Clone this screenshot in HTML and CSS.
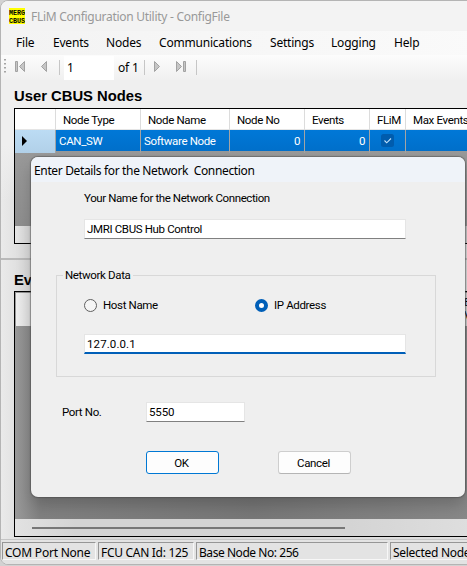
FILE: index.html
```html
<!DOCTYPE html>
<html lang="en">
<head>
<meta charset="utf-8">
<title>FLiM Configuration Utility - ConfigFile</title>
<link rel="stylesheet" href="styles.css">
</head>
<body>
<div class="window">
  <header class="titlebar">
    <svg class="logo" width="16" height="16" viewBox="0 0 16 16"><rect width="16" height="16" fill="#ffff00"/><text x="0" y="7" textLength="16" lengthAdjust="spacingAndGlyphs">MERG</text><text x="0" y="15" textLength="16" lengthAdjust="spacingAndGlyphs">CBUS</text></svg>
    <span>FLiM Configuration Utility - ConfigFile</span>
  </header>
  <nav class="menu"><span class="m1">File</span><span class="m2">Events</span><span class="m3">Nodes</span><span class="m4">Communications</span><span class="m5">Settings</span><span class="m6">Logging</span><span>Help</span></nav>
  <div class="toolbar">
    <svg class="nav-left" width="62" height="25" viewBox="0 0 62 25">
      <g fill="#a4a4a4"><path d="M3 4h2v1.500H3zM3 8h2v1.500H3zM3 12h2v1.500H3zM3 16h2v1.500H3z"/></g>
      <g fill="#c6c6c6" stroke="#a2a2a2"><path d="M14.500 6.500h2v10h-2zM23.500 6.500v10l-5-5zM45.500 6.500v10l-5-5z"/></g>
      <path d="M58.500 5v15" stroke="#c6c6c6"/>
    </svg>
    <span class="position">1</span>
    <span class="count">of 1</span>
    <svg width="56" height="25" viewBox="0 0 56 25">
      <path d="M1.500 5v15M53.500 5v15" stroke="#c6c6c6"/>
      <g fill="#c6c6c6" stroke="#a2a2a2"><path d="M11.500 6.500v10l5-5zM33.500 6.500v10l5-5zM40.500 6.500h2v10h-2z"/></g>
    </svg>
  </div>
  <main>
    <h2>User CBUS Nodes</h2>
    <section class="nodes">
      <div class="row head"><span></span><span>Node Type</span><span>Node Name</span><span>Node No</span><span>Events</span><span>FLiM</span><span>Max Events</span></div>
      <div class="row selected">
        <span class="marker"><svg width="6" height="10" viewBox="0 0 6 10"><path d="M0 0v10l5-5z"/></svg></span>
        <span>CAN_SW</span><span>Software Node</span><span class="num">0</span><span class="num">0</span>
        <span class="check"><svg width="13" height="13" viewBox="0 0 13 13"><rect width="13" height="13" rx="2.500" fill="#005cad"/><path d="M3.500 6.500l2.200 2.300 4.300-4.300" fill="none" stroke="#bfe0fa" stroke-width="1.100"/></svg></span>
        <span></span>
      </div>
      <div class="gridfoot"></div>
    </section>
    <div class="splitter"></div>
    <h2 class="events-title">Events</h2>
    <section class="events">
      <div class="events-head"><span>E<br>V</span></div>
      <div class="scroll"><i></i></div>
    </section>
  </main>
  <footer class="status"><span>COM Port None</span><span class="s2">FCU CAN Id: 125</span><span class="s3">Base Node No: 256</span><span class="s4">Selected Node</span></footer>
</div>
<div class="dialog">
  <div class="dialog-title">Enter Details for the Network&nbsp; Connection</div>
  <div class="dialog-body">
    <label class="name-label">Your Name for the Network Connection</label>
    <div class="field name"><span>JMRI CBUS Hub Control</span></div>
    <fieldset>
      <legend>Network Data</legend>
      <div class="radios">
        <label class="host"><i class="radio"></i><span>Host Name</span></label>
        <label class="ip"><i class="radio on"></i><span>IP Address</span></label>
      </div>
      <div class="field address"><span>127.0.0.1</span></div>
    </fieldset>
    <div class="port"><label>Port No.</label><div class="field"><span>5550</span></div></div>
    <div class="buttons"><div class="button primary">OK</div><div class="button">Cancel</div></div>
  </div>
</div>
</body>
</html>
```
FILE: styles.css
```css
* { box-sizing: border-box; }
body { margin: 0; width: 467px; height: 566px; overflow: hidden; background: #d2d2d2; font: 12px "Noto Sans", sans-serif; color: #000; position: relative; }
.window { width: 480px; height: 565px; border: 1px solid #b4b4b4; border-radius: 8px; background: #efefef; overflow: hidden; display: flex; flex-direction: column; }
.titlebar { height: 30px; flex: none; display: flex; align-items: center; padding-left: 8px; gap: 6px; background: #f3f3f3; color: #999; font-size: 12px; letter-spacing: -.28px; white-space: nowrap; }
.logo text { font: bold 7px "Liberation Mono", monospace; letter-spacing: 0; }
.menu { height: 24px; flex: none; display: flex; gap: 19px; align-items: center; padding: 0 0 1px 15px; background: linear-gradient(90deg, #f3f3f3, #fafafa); letter-spacing: -.2px; white-space: nowrap; }
.m1 { width: 18px; }
.m2, .m3 { width: 34px; }
.m4 { width: 92px; }
.m5 { width: 42px; }
.m6 { width: 44px; }
.toolbar { height: 25px; flex: none; display: flex; align-items: center; background: linear-gradient(#fcfcfc, #f0f0f0); }
.position { width: 50px; height: 24px; background: #fff; padding-left: 3px; line-height: 23px; margin-left: 1px; }
.count { width: 29px; padding-left: 4px; white-space: nowrap; letter-spacing: -.2px; }
.toolbar svg { flex: none; }
main { height: 459px; flex: none; padding-left: 13px; background: linear-gradient(#efefef 0 65px, transparent 120px), linear-gradient(90deg, #eaeaea, #d8d8d8 30px, #dedede); }
h2 { margin: 0; height: 28px; padding-top: 8px; font: bold 14.8px/17px "Liberation Sans", sans-serif; }
.nodes, .events { border: 1px solid #000; background: #9b9b9b; font: 11.5px Roboto, sans-serif; letter-spacing: -.35px; width: 480px; overflow: hidden; }
.nodes { height: 136px; display: flex; flex-direction: column; background: linear-gradient(#9f9f9f, #8c8c8c); }
.row { display: grid; grid-template-columns: 41px 85px 89px 75px 65px 36px 90px; height: 21px; flex: none; line-height: 20px; white-space: nowrap; }
.row > span { border-right: 1px solid #a4a4a4; padding-left: 3px; }
.head { background: #fff; border-bottom: 1px solid #e5e5e5; }
.row.head > span { padding-left: 7px; border-color: #dcdcdc; line-height: 22px; }
.row.selected { background: linear-gradient(#0078d7, #006fca); color: #fff; height: 22px; line-height: 23px; border-bottom: 1px solid #999; }
.row .marker { background: linear-gradient(#bcdcf4, #b1d0e8); padding: 6px 0 0 7px; line-height: 0; }
.row .num { text-align: right; padding-right: 4px; }
.row .check { padding: 4px 0 0 11px; line-height: 0; }
.gridfoot { height: 17px; margin-top: auto; background: linear-gradient(90deg, #e6e6e6, #c7c7c7 30px); }
.splitter { height: 2px; margin: 14px 0 0 -13px; background: #b9b9b9; }
h2.events-title { height: 31px; padding-top: 12px; }
.events { height: 246px; display: flex; flex-direction: column; background: linear-gradient(90deg, #999, #808080 25px, #777 50%, #8a8a8a); }
.events-head { margin: 1px 0 0 1px; height: 33px; flex: none; background: linear-gradient(90deg, #eee, #cfcfcf 30px); padding: 3px 0 0 448px; line-height: 13px; }
.scroll { margin-top: auto; height: 17px; background: linear-gradient(90deg, #e2e2e2, #d4d4d4 60px, #d4d4d4 70%, #e0e0e0); padding: 8px 0 0 17px; }
.scroll i { display: block; height: 2px; width: 313px; background: #777; }
.status { height: 25px; flex: none; border-top: 1px solid #c5c5c5; padding: 2px 0 0 1px; display: flex; gap: 2px; background: #e3e3e3; }
.status span { flex: none; height: 18px; width: 94px; border: 1px solid; border-color: #969696 #f7f7f7 #f7f7f7 #969696; padding-left: 2px; line-height: 19px; white-space: nowrap; letter-spacing: -.22px; }
.status .s2 { width: 96px; letter-spacing: -.3px; }
.status .s3 { width: 192px; letter-spacing: -.45px; }
.status .s4 { width: 90px; letter-spacing: -.3px; }
.dialog { position: absolute; left: 31px; top: 157px; width: 434px; height: 340px; border-radius: 7px; background: #efefef; box-shadow: 0 0 1px 1px rgba(70,70,70,.5), 0 8px 16px rgba(0,0,0,.2); overflow: hidden; }
.dialog-title { height: 25px; background: #eff3f9; line-height: 27px; padding-left: 3px; white-space: nowrap; letter-spacing: -.35px; }
.dialog-body { font: 11.5px Roboto, sans-serif; letter-spacing: -.35px; padding: 9px 29px 0 25px; }
.name-label { display: block; margin-left: 28px; line-height: 15px; letter-spacing: -.4px; white-space: nowrap; }
.field { background: #fff; border: 1px solid #e5e5e5; border-bottom-color: #808080; width: 322px; height: 20px; line-height: 19px; padding-left: 2px; }
.field.name { margin: 13px 0 0 28px; }
fieldset { height: 109px; margin: 29px 0 0; padding: 0; border: 1px solid #d8d8d8; min-width: 0; }
legend { margin-left: 6px; padding: 0 3px 0 2px; line-height: 15px; }
.radios { display: flex; padding: 13px 0 0 27px; }
.radios label { display: flex; gap: 6px; align-items: center; height: 18px; }
.radios .host { width: 171px; }
.radio { width: 13px; height: 13px; border: 1px solid #606060; border-radius: 50%; background: #f5f5f5; flex: none; }
.radio.on { border: 4px solid #005fb8; background: #fff; }
.field.address { margin: 20px 0 0 27px; border-bottom: 2px solid #005fb8; letter-spacing: .1px; }
.port { display: flex; align-items: center; margin: 25px 0 0 6px; }
.port label { width: 84px; }
.port .field { width: 99px; letter-spacing: -.1px; }
.buttons { display: flex; gap: 59px; margin: 29px 0 0 90px; }
.button { width: 73px; height: 23px; border: 1px solid #cecece; border-bottom-color: #b5b5b5; border-radius: 3px; background: #fdfdfd; line-height: 22px; text-align: center; padding-right: 2px; }
.button.primary { border-color: #0078d4; }
```
